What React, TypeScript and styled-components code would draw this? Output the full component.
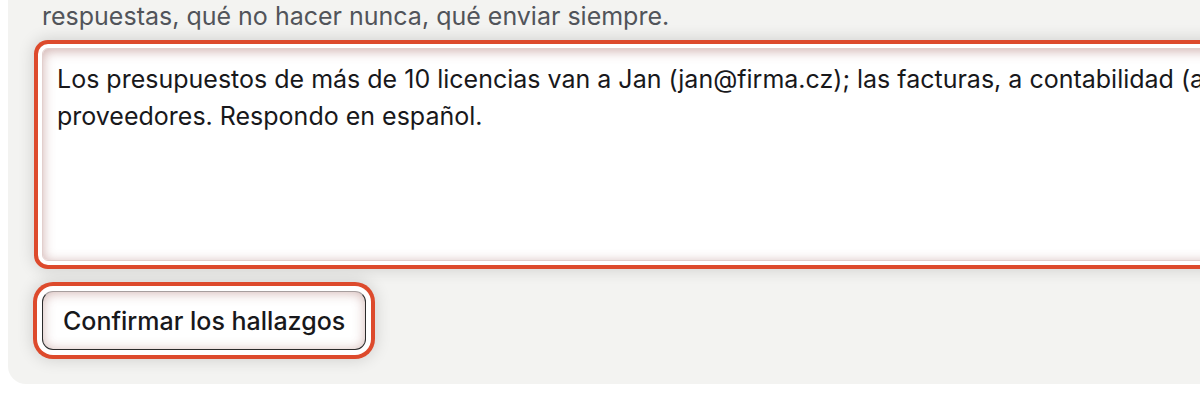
import React from "react";
import styled, { createGlobalStyle } from "styled-components";

const GlobalStyle = createGlobalStyle`
  html, body {
    margin: 0;
    padding: 0;
    background: #ffffff;
    overflow: hidden;
  }
  body {
    font-family: Inter, "Noto Sans", "Liberation Sans", sans-serif;
  }
`;

const Page = styled.div`
  width: 1200px;
  height: 400px;
  padding-left: 8px;
  box-sizing: border-box;
  overflow: hidden;
`;

const Panel = styled.section`
  width: 1900px;
  box-sizing: border-box;
  background: #f3f3f1;
  border-radius: 0 0 0 18px;
  padding: 0 34px 34px;
  display: flex;
  flex-direction: column;
  align-items: flex-start;
`;

const Hint = styled.p`
  margin: 0;
  font-size: 25px;
  line-height: 32px;
  color: #51545a;
`;

// white gap + red highlight ring + soft grey halo
const ring = (gap: number) => `
  0 0 0 ${gap}px #ffffff,
  0 0 0 ${gap + 4}px #dd4a2c,
  0 0 16px ${gap + 5}px rgba(0, 0, 0, 0.14)
`;

const Notes = styled.textarea`
  margin-top: 16px;
  width: 100%;
  height: 213px;
  box-sizing: border-box;
  resize: none;
  padding: 12px 14px;
  border: 1px solid #e2cfcd;
  border-radius: 6px;
  background: #ffffff;
  font-family: inherit;
  font-size: 25px;
  line-height: 37px;
  color: #18181b;
  outline: none;
  box-shadow: inset 0 2px 12px rgba(150, 80, 75, 0.45), ${ring(4)};
`;

const ConfirmButton = styled.button`
  margin-top: 30px;
  height: 59px;
  padding: 0 20px;
  box-sizing: border-box;
  border: 1px solid #2b2b2b;
  border-top-color: rgba(60, 40, 40, 0.45);
  border-radius: 11px;
  background: #ffffff;
  font-family: inherit;
  font-size: 25px;
  font-weight: 500;
  color: #18181b;
  cursor: pointer;
  box-shadow: inset 0 1px 12px rgba(150, 80, 75, 0.42), ${ring(5)};
`;

const notes =
  "Los presupuestos de más de 10 licencias van a Jan (jan@firma.cz); las facturas, a contabilidad (ap@firma.cz); los pedidos, a\nproveedores. Respondo en español.";

export default function App() {
  return (
    <>
      <GlobalStyle />
      <Page>
        <Panel>
          <Hint>respuestas, qué no hacer nunca, qué enviar siempre.</Hint>
          <Notes defaultValue={notes} spellCheck={false} />
          <ConfirmButton type="button">Confirmar los hallazgos</ConfirmButton>
        </Panel>
      </Page>
    </>
  );
}
